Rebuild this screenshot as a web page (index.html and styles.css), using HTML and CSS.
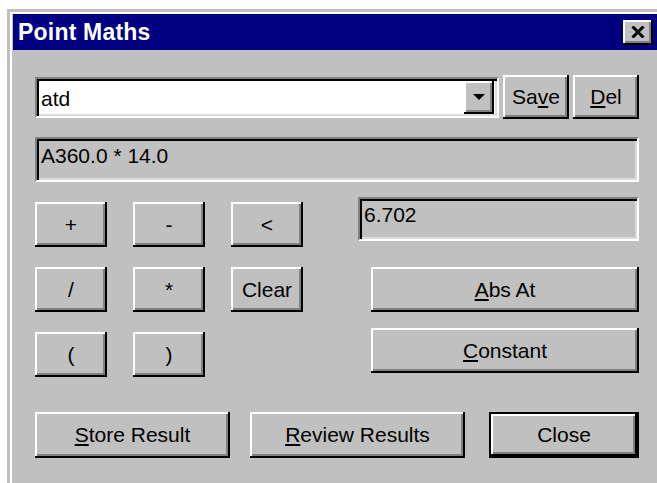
FILE: index.html
```html
<!DOCTYPE html>
<html lang="en">
<head>
<meta charset="utf-8">
<title>Point Maths</title>
<link rel="stylesheet" href="styles.css">
</head>
<body>
<div class="window">
  <div class="titlebar">
    <span class="title">Point Maths</span>
    <button class="btn close-x" aria-label="Close">
      <svg width="14" height="12" viewBox="0 0 14 12"><path d="M1.5 0.5 L12.5 11.5 M12.5 0.5 L1.5 11.5" stroke="#000" stroke-width="3" fill="none"/></svg>
    </button>
  </div>
  <div class="client">
    <div class="row-top">
      <div class="combo">
        <span class="combo-text">atd</span>
        <span class="btn drop"><svg width="12" height="6" viewBox="0 0 12 6"><polygon points="0,0 12,0 6,6" fill="#000"/></svg></span>
      </div>
      <button class="btn small">Sa<u>v</u>e</button>
      <button class="btn small"><u>D</u>el</button>
    </div>
    <div class="field expr">A360.0 * 14.0</div>
    <div class="calc">
      <div class="keys">
        <button class="btn key">+</button>
        <button class="btn key">-</button>
        <button class="btn key">&lt;</button>
        <button class="btn key">/</button>
        <button class="btn key">*</button>
        <button class="btn key">Clear</button>
        <button class="btn key">(</button>
        <button class="btn key">)</button>
      </div>
      <div class="side">
        <div class="field result">6.702</div>
        <button class="btn wide abs"><u>A</u>bs At</button>
        <button class="btn wide const"><u>C</u>onstant</button>
      </div>
    </div>
    <div class="actions">
      <button class="btn store"><u>S</u>tore Result</button>
      <button class="btn review"><u>R</u>eview Results</button>
      <button class="btn close default">Close</button>
    </div>
  </div>
</div>
</body>
</html>
```

FILE: styles.css
```css
html, body {
  margin: 0;
  padding: 0;
  background: #fff;
  overflow: hidden;
}

body {
  width: 657px;
  height: 483px;
  font-family: "Liberation Sans", Arial, sans-serif;
  font-size: 21px;
  color: #000;
}

/* dialog frame: grey rim, white highlight, then grey */
.window {
  box-sizing: border-box;
  margin: 9px 0 0 7px;
  width: 650px;
  height: 474px;
  padding: 5px 0 0 6px;
  background: #c0c0c0;
  box-shadow: inset 3px 3px 0 #c0c0c0, inset 5px 5px 0 #fff;
}

.titlebar {
  height: 36px;
  background: #000080;
  display: flex;
  align-items: center;
  justify-content: space-between;
  padding: 0 4px 0 5px;
}

.title {
  color: #fff;
  font-weight: bold;
  font-size: 23px;
  letter-spacing: 0.2px;
  margin-top: 1px;
}

/* raised 3D button */
.btn {
  box-sizing: border-box;
  border: 0;
  margin: 0;
  padding: 0;
  background: #c0c0c0;
  font: inherit;
  color: #000;
  display: flex;
  align-items: center;
  justify-content: center;
  box-shadow: inset -2px -2px 0 #000, inset 2px 2px 0 #fff, inset -4px -4px 0 #808080;
}

.btn u {
  text-underline-offset: 2px;
  text-decoration-thickness: 2px;
}

.close-x {
  width: 30px;
  height: 25px;
  padding: 0 1px 1px 0;
}

.client {
  padding: 25px 18px 0 22px;
}

.row-top {
  display: flex;
  align-items: center;
  gap: 4px;
  height: 44px;
}

/* sunken field */
.combo,
.field {
  box-sizing: border-box;
  border: 2px solid;
  border-color: #808080 #fff #fff #808080;
  box-shadow: inset 2px 2px 0 #000, inset -2px -2px 0 #dcdcdc;
}

.combo {
  width: 464px;
  height: 41px;
  background: #fff;
  display: flex;
  align-items: center;
  justify-content: space-between;
  padding: 2px 3px 2px 4px;
  margin-top: 1px;
}

.combo-text {
  margin-top: 2px;
}

.drop {
  width: 30px;
  height: 33px;
  padding: 0 1px 2px 0;
}

.small {
  width: 66px;
  height: 44px;
}

.field {
  background: #c0c0c0;
  padding: 4px 0 0 4px;
  line-height: 24px;
}

.expr {
  margin-top: 18px;
  width: 604px;
  height: 45px;
  padding-top: 5px;
}

.calc {
  display: flex;
  margin-top: 15px;
}

.keys {
  display: grid;
  grid-template-columns: 72px 72px 72px;
  grid-auto-rows: 45px;
  column-gap: 26px;
  row-gap: 20px;
  margin-top: 5px;
}

.side {
  margin-left: 55px;
  width: 281px;
}

.result {
  height: 44px;
}

.wide {
  width: 268px;
  height: 45px;
  margin-left: 13px;
}

.abs {
  margin-top: 26px;
}

.const {
  margin-top: 16px;
}

.actions {
  display: flex;
  margin-top: 35px;
}

.actions .btn {
  height: 46px;
}

.store {
  width: 195px;
}

.review {
  width: 215px;
  margin-left: 20px;
}

.close {
  width: 150px;
  margin-left: 24px;
}

/* default button carries a black outline */
.default {
  border: 2px solid #000;
}
```
